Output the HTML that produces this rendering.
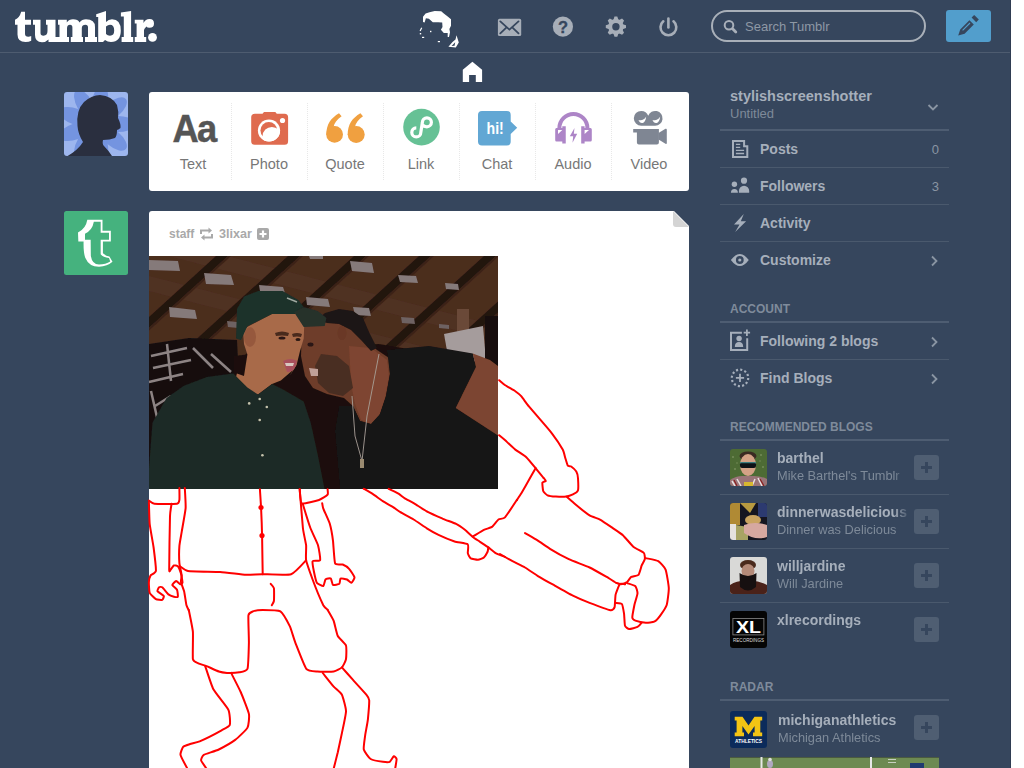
<!DOCTYPE html>
<html><head><meta charset="utf-8">
<style>
*{margin:0;padding:0;box-sizing:border-box}
html,body{width:1024px;height:768px;overflow:hidden;background:#fff}
body{font-family:"Liberation Sans",sans-serif;position:relative}
#page{position:absolute;left:0;top:0;width:1011px;height:768px;background:#36465d;overflow:hidden}
.abs{position:absolute}
svg{position:absolute;overflow:visible}
#hdr-line{left:0;top:52px;width:1011px;height:1px;background:#4e5c70}
.search{left:711px;top:10px;width:215px;height:32px;border:2px solid #a9b0b9;border-radius:16px}
.search span{position:absolute;left:32px;top:6.5px;font-size:13px;color:#8e98a5;line-height:16px}
.compose{left:946px;top:10px;width:45px;height:32px;background:#529ecc;border-radius:3px}
.box{background:#fff;border-radius:3px}
.ptype{left:149px;top:92px;width:540px;height:99px}
.col{position:absolute;top:0;width:76px;height:99px;text-align:center}
.col .lbl{position:absolute;left:0;width:76px;top:64px;font-size:14.5px;color:#777;line-height:16px}
.sep{position:absolute;top:11px;width:0;height:77px;border-left:1px dotted #e8e8e8}
.row{position:absolute;left:720px;width:229px;height:37px;border-top:1px solid #4a596d}
.row .nm{position:absolute;left:40px;top:10px;font-size:14px;font-weight:bold;color:#a6afbb;line-height:16px}
.row .cnt{position:absolute;right:10px;top:11px;font-size:13px;color:#8a95a3;line-height:16px}
.hd{position:absolute;left:730px;font-size:12px;font-weight:bold;color:#7f8b9b;line-height:14px}
.hline{position:absolute;left:720px;width:229px;height:2px;background:#4e5d72}
.rb{position:absolute;left:720px;width:229px;height:54px}
.rb .av{position:absolute;left:10px;top:7px;width:37px;height:37px;border-radius:3px;overflow:hidden}
.rb .n{position:absolute;left:57px;top:8px;font-size:14px;font-weight:bold;color:#a6afbb;white-space:nowrap;width:134px;overflow:hidden;line-height:16px}
.rb .d{position:absolute;left:57px;top:26px;font-size:12.8px;color:#7e8a99;white-space:nowrap;width:128px;overflow:hidden;line-height:16px}
.rb .n{-webkit-mask-image:linear-gradient(to right,#000 87%,transparent 100%)}
.rb .d{-webkit-mask-image:linear-gradient(to right,#000 92%,transparent 100%)}
.rb .pl{position:absolute;left:194px;top:13px;width:25px;height:25px;border-radius:3px;background:#4f5e72}
.rb .pl:before{content:"";position:absolute;left:7px;top:11px;width:11px;height:3px;background:#36465d}
.rb .pl:after{content:"";position:absolute;left:11px;top:7px;width:3px;height:11px;background:#36465d}
.rsep{position:absolute;left:720px;width:229px;height:1px;background:#4a596d}
.post{left:149px;top:211px;width:540px;height:600px;border-radius:3px 0 0 0}
</style></head><body>
<div id="page">
  <div class="abs" id="hdr-line"></div>
  <div class="abs" style="left:1010px;top:0;width:1px;height:768px;background:#2f3c52"></div>
  <!-- logo -->
  <svg style="left:0;top:0" width="180" height="52" fill="#fff">
    <path d="M21.2,11.8 L25,11.8 L25,19.7 L31,19.7 L31,24.8 L25,24.8 L25,33.5 Q25,36.8 28.2,36.8 Q30,36.8 31.2,36 L31.2,40.8 Q29,42 25.5,42 Q17.5,42 17.5,34.5 L17.5,24.8 L15,24.8 L15,19.7 Q19.5,18 21.2,11.8 Z"/>
    <path d="M33,19.7 L40.5,19.7 L40.5,33 Q40.5,35.7 43.5,35.7 Q47.5,35.5 47.5,31 L47.5,24.8 L46,24.8 L46,19.7 L55.5,19.7 L55.5,36.9 L59,36.9 L59,42 L48.5,42 L48.5,39.5 Q46,42.2 42,42.2 Q35,42.2 35,35 L35,24.8 L33,24.8 Z"/>
    <path d="M58,19.7 L66.8,19.7 L66.8,22.5 Q69,19.3 73,19.3 Q78,19.3 79.5,22.5 Q82,19.3 86,19.3 Q95,19.3 95,27 L95,36.9 L97,36.9 L97,42 L85,42 L85,36.9 L88,36.9 L88,27.5 Q88,24.8 85.5,24.8 Q82,24.8 81.8,28 L81.8,36.9 L83,36.9 L83,42 L70.8,42 L70.8,36.9 L72.4,36.9 L72.4,27.5 Q72.4,24.8 70,24.8 Q67.3,24.8 67,28 L67,36.9 L69,36.9 L69,42 L58,42 L58,36.9 L59.5,36.9 L59.5,24.8 L58,24.8 Z"/>
    <path fill-rule="evenodd" d="M96.2,14.3 L106,11.1 L106,22 Q108.5,19.3 112,19.3 Q120.8,19.3 120.8,30.6 Q120.8,42 111,42 Q107.5,42 105,40 L103,42 L98.2,42 L98.2,17 L96.2,17 Z M106,26.5 Q108,24.8 110,24.8 Q114.2,24.8 114.2,30.5 Q114.2,35.7 110,35.7 Q107.5,35.7 106,34 Z"/>
    <path d="M120.9,12.4 L131.1,10.9 L131.1,36.9 L133.2,36.9 L133.2,41.9 L121.6,41.9 L121.6,36.9 L123.8,36.9 L123.8,16.6 L120.9,16.6 Z"/>
    <path d="M134.75,19.8 L143.5,19.8 L143.5,23 Q145.5,19 149.5,19 Q154,19 154,23.4 Q154,27.8 149.5,27.8 Q147,27.8 146.5,26.5 Q144.5,28 144,30 L144,36.9 L146.2,36.9 L146.2,41.9 L134.75,41.9 L134.75,36.9 L136.6,36.9 L136.6,23.6 L134.75,23.6 Z"/>
    <circle cx="152.5" cy="37.4" r="4.4"/>
  </svg>
  <!-- hair icon -->
  <svg style="left:0;top:0" width="470" height="52" fill="#fff">
    <path d="M423,16.7 L425.6,13.5 L429.5,12.2 L434.7,10.9 L441.2,11.2 L443.8,13.5 L447.7,16.4 L451,19.3 L451,25.8 L449.4,29.1 L450,32.3 L449,36.9 L447.7,36.9 L447.7,33 L443.8,33 L440.9,29.7 L442.5,27.1 L442.2,22.6 L438,22.2 L432.8,22.2 L428.9,18.7 L425.9,18.3 L424.6,22.6 L423,21.9 Z"/>
    <path d="M421.7,27.8 L420.1,31" stroke="#fff" stroke-width="1.2" fill="none"/>
    <rect x="419.8" y="33" width="1.4" height="1.4"/><rect x="430" y="30.8" width="1.4" height="1.4"/>
    <rect x="422" y="36.8" width="2.2" height="1.2"/><rect x="437.8" y="41" width="2.2" height="1.2"/>
    <path fill-rule="evenodd" d="M456.5,35.3 L458.8,42.5 L455.8,47.6 L448.4,46.8 L452.5,42 L455.5,39.5 Z M455.2,42.3 L451.5,46 L454.6,45.8 Z"/>
  </svg>
  <!-- mail -->
  <svg style="left:0;top:0" width="700" height="52">
    <rect x="497.9" y="18.8" width="23.3" height="17.3" rx="1.6" fill="#a7aeb8"/>
    <path d="M500.3,21.4 L509.4,29.6 L518.5,21.4 M500.3,33.4 L506.3,27.6 M518.5,33.4 L512.5,27.6" stroke="#36465d" stroke-width="1.8" fill="none" stroke-linecap="round"/>
    <circle cx="562.9" cy="26.7" r="10.1" fill="#a7aeb8"/>
    <text x="563" y="32.8" text-anchor="middle" font-family="Liberation Sans" font-weight="bold" font-size="16.5" fill="#36465d" stroke="#36465d" stroke-width="0.3">?</text>
    <g transform="translate(615.9,26.7)" fill="#a7aeb8">
      <circle r="7.6"/>
      <path d="M-1.4,-10.1 L1.4,-10.1 L2.8,-6 L-2.8,-6 Z"/>
      <path d="M-1.4,-10.1 L1.4,-10.1 L2.8,-6 L-2.8,-6 Z" transform="rotate(45)"/>
      <path d="M-1.4,-10.1 L1.4,-10.1 L2.8,-6 L-2.8,-6 Z" transform="rotate(90)"/>
      <path d="M-1.4,-10.1 L1.4,-10.1 L2.8,-6 L-2.8,-6 Z" transform="rotate(135)"/>
      <path d="M-1.4,-10.1 L1.4,-10.1 L2.8,-6 L-2.8,-6 Z" transform="rotate(180)"/>
      <path d="M-1.4,-10.1 L1.4,-10.1 L2.8,-6 L-2.8,-6 Z" transform="rotate(225)"/>
      <path d="M-1.4,-10.1 L1.4,-10.1 L2.8,-6 L-2.8,-6 Z" transform="rotate(270)"/>
      <path d="M-1.4,-10.1 L1.4,-10.1 L2.8,-6 L-2.8,-6 Z" transform="rotate(315)"/>
      <circle r="3.7" fill="#36465d"/>
    </g>
    <path d="M663.3,21.3 A7.9,7.9 0 1 0 673.5,21.3" stroke="#a7aeb8" stroke-width="2.6" fill="none" stroke-linecap="round"/>
    <path d="M668.4,18.6 L668.4,27.4" stroke="#a7aeb8" stroke-width="2.6" fill="none" stroke-linecap="round"/>
  </svg>
  <div class="abs search"><span>Search Tumblr</span></div>
  <svg style="left:0;top:0" width="760" height="52">
    <circle cx="729" cy="25.2" r="4.3" stroke="#a9b0ba" stroke-width="2" fill="none"/>
    <path d="M732.6,28.8 L735.8,32" stroke="#a9b0ba" stroke-width="2.8" stroke-linecap="round"/>
  </svg>
  <div class="abs compose"></div>
  <svg style="left:0;top:0" width="1000" height="52" fill="#36465d">
    <path d="M971.6,17.6 L974.2,15 L978.8,19.6 L976.2,22.2 Z"/>
    <path fill-rule="evenodd" d="M969.4,20.2 L973.8,24.6 L964.6,33.8 L958.2,35.6 L960.2,29.4 Z M969.6,22.6 L962.2,30 L963,30.8 L970.4,23.4 Z"/>
  </svg>
  <!-- home -->
  <svg style="left:0;top:0" width="490" height="90" fill="#fff">
    <path d="M472.4,61.8 L482.1,69.8 L482.1,82.1 L475.8,82.1 L475.8,75 L469.1,75 L469.1,82.1 L462.8,82.1 L462.8,69.8 Z"/>
  </svg>

  <!-- avatar 1 -->
  <svg style="left:64px;top:92px" width="64" height="64" viewBox="0 0 64 64">
    <defs><clipPath id="c1"><rect width="64" height="64" rx="3"/></clipPath></defs>
    <g clip-path="url(#c1)">
      <rect width="64" height="64" fill="#9db6ee"/>
      <g fill="#7494e0" transform="translate(32,32)"><ellipse rx="8" ry="17" transform="rotate(10) translate(0,-22)"/><ellipse rx="8" ry="17" transform="rotate(50) translate(0,-22)"/><ellipse rx="8" ry="17" transform="rotate(90) translate(0,-22)"/><ellipse rx="8" ry="17" transform="rotate(130) translate(0,-22)"/><ellipse rx="8" ry="17" transform="rotate(170) translate(0,-22)"/><ellipse rx="8" ry="17" transform="rotate(210) translate(0,-22)"/><ellipse rx="8" ry="17" transform="rotate(250) translate(0,-22)"/><ellipse rx="8" ry="17" transform="rotate(290) translate(0,-22)"/><ellipse rx="8" ry="17" transform="rotate(330) translate(0,-22)"/></g>
      <path fill="#2a2f3f" d="M3.6,64 Q14,58 19,50 Q14,42 13.5,34 Q12,18 20,10 Q28,3 36,3 Q48,4 53,13 Q55,20 54,26 Q57,32 56.5,36 Q54,38 53,38 Q53,44 51,46 Q46,48 39,48 Q38,52 40,54 Q44,58 48,64 Z"/>
    </g>
  </svg>
  <div class="abs box ptype">
    <div class="col" style="left:6px"><div class="lbl">Text</div></div>
    <div class="sep" style="left:82px"></div>
    <div class="col" style="left:82px"><div class="lbl">Photo</div></div>
    <div class="sep" style="left:158px"></div>
    <div class="col" style="left:158px"><div class="lbl">Quote</div></div>
    <div class="sep" style="left:234px"></div>
    <div class="col" style="left:234px"><div class="lbl">Link</div></div>
    <div class="sep" style="left:310px"></div>
    <div class="col" style="left:310px"><div class="lbl">Chat</div></div>
    <div class="sep" style="left:386px"></div>
    <div class="col" style="left:386px"><div class="lbl">Audio</div></div>
    <div class="sep" style="left:462px"></div>
    <div class="col" style="left:462px"><div class="lbl">Video</div></div>
  </div>
  <!-- post type icons (page coords) -->
  <svg style="left:0;top:0" width="700" height="200">
    <text x="0" y="0" transform="translate(172.5,141.6) scale(0.92,1)" font-family="Liberation Sans" font-weight="bold" font-size="39.5" letter-spacing="-2" fill="#555" stroke="#555" stroke-width="0.5">Aa</text>
    <!-- camera -->
    <path fill="#df6b4f" d="M255,113.8 L262.5,113.8 L264,112 L275.3,112 L276.8,113.8 L284.6,113.8 Q288.1,113.8 288.1,117.3 L288.1,141.3 Q288.1,144.8 284.6,144.8 L254.7,144.8 Q251.2,144.8 251.2,141.3 L251.2,117.3 Q251.2,113.8 255,113.8 Z"/>
    <circle cx="269" cy="130.5" r="11.1" fill="#fff"/>
    <defs><clipPath id="lens"><circle cx="269" cy="130.5" r="11.1"/></clipPath></defs>
    <circle cx="268.8" cy="130.4" r="8.36" fill="#df6b4f"/>
    <circle cx="271.9" cy="136.2" r="9.3" fill="#fff" clip-path="url(#lens)"/>
    <circle cx="282.5" cy="120.5" r="2.6" fill="#fff"/>
    <!-- quote -->
    <g fill="#f0a040">
      <circle cx="334.6" cy="134.4" r="8.4"/>
      <path d="M326.3,135 C326.3,124 331,118 339,113.2 L341.6,116.2 C337,119.5 334,123 333.6,127 Z"/>
      <circle cx="356.2" cy="134.4" r="8.5"/>
      <path d="M347.7,135 C347.7,124 352.4,118 360.4,113.2 L363,116.2 C358.4,119.5 355.4,123 355,127 Z"/>
    </g>
    <!-- link -->
    <circle cx="421.5" cy="127.1" r="18.3" fill="#66c195"/>
    <path d="M416.3,127.9 A4.5,4.5 0 1 0 420.8,132.4 L422.4,122.3 A4.5,4.5 0 1 1 426.9,126.8 Q424,126.8 422.4,124.8" stroke="#fff" stroke-width="3.2" fill="none" stroke-linejoin="round"/>
    <!-- chat -->
    <path fill="#62a7d4" d="M482,110.9 L506.7,110.9 Q510.7,110.9 510.7,114.9 L510.7,121.5 L517.2,127.8 L510.7,134.1 L510.7,141.5 Q510.7,145.5 506.7,145.5 L482,145.5 Q478,145.5 478,141.5 L478,114.9 Q478,110.9 482,110.9 Z"/>
    <text x="486.6" y="134" font-family="Liberation Sans" font-weight="bold" font-size="16.5" fill="#fff" textLength="17.2" lengthAdjust="spacingAndGlyphs">hi!</text>
    <!-- audio -->
    <g fill="#ad85c7">
      <path d="M557.4,128 A16,16 0 0 1 589.4,128 L585.4,128 A12,12 0 0 0 561.4,128 Z"/>
      <path fill-rule="evenodd" d="M562.3,126.3 L565.75,126.3 L565.75,143.5 L562.3,143.5 L562.3,141.5 L556.5,141.5 Q555.2,141.5 555.2,140 L555.2,129.5 Q555.2,128 556.5,128 L562.3,128 Z M558,130 L562.3,130 L558,134 Z"/>
      <path fill-rule="evenodd" d="M584.6,126.3 L581.2,126.3 L581.2,143.5 L584.6,143.5 L584.6,141.5 L590.4,141.5 Q591.8,141.5 591.8,140 L591.8,129.5 Q591.8,128 590.4,128 L584.6,128 Z M584.6,130 L589,130 L584.6,134 Z"/>
      <path d="M574.5,128 L569.8,136.3 L573.2,136.3 L572.5,142.7 L577.2,133.8 L573.8,133.8 Z"/>
    </g>
    <!-- video -->
    <g fill="#7f8693">
      <path fill-rule="evenodd" d="M641.2,110.9 A7.4,7.4 0 0 1 648.2,115.8 A7.4,7.4 0 1 1 655.2,125.7 L641.2,125.7 A7.4,7.4 0 0 1 641.2,110.9 Z M638.5,120 C640,124.5 645.5,124.5 646.2,116.5 C644.5,119.8 641.5,120.8 638.5,120 Z M652.5,120 C654,124.5 659.5,124.5 660.2,116.5 C658.5,119.8 655.5,120.8 652.5,120 Z"/>
      <path d="M633.2,128.9 L658.9,128.9 L658.9,142.4 Q658.9,144.4 656.9,144.4 L638.9,144.4 Q636.9,144.4 636.9,142.4 L636.9,132.6 L633.2,132.6 Z"/>
      <path d="M658.5,133 L665.5,128.8 Q666.8,128.3 666.8,129.8 L666.8,143 Q666.8,144.4 665.5,143.7 L658.5,139.5 Z"/>
    </g>
  </svg>

  <!-- avatar 2 -->
  <svg style="left:64px;top:211px" width="64" height="64" viewBox="0 0 768 768">
    <rect width="768" height="768" rx="30" fill="#45b27e"/>
    <path fill="#fff" d="M280,105 L462,105 L462,238 L562,238 L562,367 L467,367 L467,508 Q500,540 545,545 L582,610 Q520,665 420,668 Q300,668 255,560 Q232,500 235,367 L172,367 L168,258 Q262,212 280,105 Z"/>
    <path fill="#45b27e" d="M358,130 L440,130 L440,262 L540,262 L540,345 L440,345 L440,520 Q470,558 540,565 L555,605 Q500,640 420,642 Q338,640 322,540 L320,345 L252,345 L252,272 Q340,235 358,130 Z"/>
  </svg>
  <div class="abs box post"></div>
  <!-- fold -->
  <svg style="left:0;top:0" width="700" height="240">
    <path d="M673,210 L690,210 L690,227 Z" fill="#36465d"/>
    <path d="M673,211 L689,227 L676,227 Q673,227 673,224 Z" fill="#d4d4d4"/>
  </svg>
  <!-- reblog header -->
  <div class="abs" style="left:169px;top:227px;font-size:12px;font-weight:bold;color:#a9a9a9;line-height:14px">staff</div>
  <svg style="left:0;top:0" width="300" height="250">
    <g fill="none" stroke="#a9a9a9" stroke-width="2">
      <path d="M201,234 L201,230.5 L209,230.5"/>
      <path d="M212,234 L212,237.5 L204,237.5"/>
    </g>
    <path d="M208.5,227.5 L212,230.5 L208.5,233.5 Z" fill="#a9a9a9"/>
    <path d="M204.5,234.5 L201,237.5 L204.5,240.5 Z" fill="#a9a9a9"/>
    <rect x="257" y="228" width="12" height="12" rx="2" fill="#a9a9a9"/>
    <path d="M263,230.5 L263,237.5 M259.5,234 L266.5,234" stroke="#fff" stroke-width="2.2"/>
  </svg>
  <div class="abs" style="left:219px;top:227px;font-size:12.6px;font-weight:bold;color:#a9a9a9;line-height:14px">3lixar</div>
  <!-- photo -->
  <svg style="left:149px;top:256px;overflow:hidden" width="349" height="233" viewBox="0 0 349 233">
<defs><filter id="soft" x="0" y="0" width="1" height="1"><feGaussianBlur stdDeviation="0.7"/></filter></defs><rect width="349" height="233" fill="#2a1a14"/><g filter="url(#soft)">
    <rect width="349" height="233" fill="#2e1912"/>
<!-- ceiling -->
<rect width="349" height="140" fill="#4b2d1f"/>
<g opacity="0.5"><polygon points="0,20 349,110 349,125 0,35" fill="#563424"/><polygon points="0,-20 349,70 349,85 0,-5" fill="#563424"/></g>
<polygon points="67,0 79,0 -75.0,140 -87.0,140" fill="#24140f"/>
<polygon points="79,0 82,0 -72.0,140 -75.0,140" fill="#3a2117"/>
<polygon points="139,0 151,0 -3.0,140 -15.0,140" fill="#24140f"/>
<polygon points="151,0 154,0 0.0,140 -3.0,140" fill="#3a2117"/>
<polygon points="205,0 217,0 63.0,140 51.0,140" fill="#24140f"/>
<polygon points="217,0 220,0 66.0,140 63.0,140" fill="#3a2117"/>
<polygon points="270,0 282,0 128.0,140 116.0,140" fill="#24140f"/>
<polygon points="282,0 285,0 131.0,140 128.0,140" fill="#3a2117"/>
<polygon points="335,0 347,0 193.0,140 181.0,140" fill="#24140f"/>
<polygon points="347,0 350,0 196.0,140 193.0,140" fill="#3a2117"/>
<polygon points="399,0 411,0 257.0,140 245.0,140" fill="#24140f"/>
<polygon points="411,0 414,0 260.0,140 257.0,140" fill="#3a2117"/>
<g fill="#857a7a">
  <polygon points="0,4 29,5 31,15 0,14"/>
  <polygon points="55,17 82,19 85,29 57,28"/>
  <polygon points="20,51 46,54 48,63 21,61"/>
  <polygon points="110,29 134,31 136,37 111,35"/>
  <polygon points="157,41 179,43 181,51 158,49"/>
  <polygon points="201,5 223,7 225,17 203,15"/>
  <polygon points="204,51 220,52 222,60 206,59"/>
  <polygon points="249,19 267,20 269,27 251,26"/>
  <polygon points="296,27 309,28 310,34 297,33"/>
  <polygon points="160,0 174,0 174,3 161,3"/>
  <polygon points="252,61 265,62 266,68 253,67" fill="#6e6262"/>
  <polygon points="290,68 300,69 300,73 290,72" fill="#6e6262"/>
  <polygon points="78,65 88,66 89,72 79,71" fill="#6e6262"/>
</g>
<!-- left wall with graffiti -->
<polygon points="0,88 40,82 88,84 90,125 60,122 0,150" fill="#151011"/>
<polygon points="0,120 30,112 60,118 40,135 0,215" fill="#151011"/>
<g stroke="#8d8383" stroke-width="2.5" fill="none">
  <path d="M2,100 L38,92 M4,112 L42,104 M18,88 L22,125 M0,126 L34,118 M44,92 L64,112 M62,98 L82,116"/>
  <path d="M2,135 L10,170 M6,150 L22,140"/>
</g>
<!-- background right post/poster -->
<rect x="308" y="53" width="12" height="28" fill="#6a4838"/>
<polygon points="295,78 334,70 337,105 300,106" fill="#a59c9c"/>
<rect x="336" y="60" width="13" height="60" fill="#140d0b"/>
<!-- dark backdrop -->
<polygon points="85,100 150,92 230,88 300,100 300,233 85,233" fill="#1d100c"/>
<!-- person 2 hair/face -->
<polygon points="153,72 168,64 188,64 205,70 216,82 228,94 240,102 241,118 237,140 231,158 222,168 211,165 204,150 195,142 178,138 164,132 156,120 152,100" fill="#6e3d2a"/>
<polygon points="200,90 222,92 238,104 240,120 236,142 230,160 222,168 212,164 206,148 202,128" fill="#7e4530"/>
<polygon points="168,64 176,57 190,53 204,55 214,62 220,76 228,92 222,95 212,84 202,74 190,68 178,67" fill="#1f1512"/>
<ellipse cx="193" cy="77" rx="4.5" ry="7" fill="#6a3826"/>
<polygon points="172,98 188,100 200,110 204,132 194,140 180,137 169,127 166,110" fill="#4a2d22"/>
<polygon points="160,112 169,113 169,120 162,120" fill="#c0a098"/>
<ellipse cx="161.5" cy="88.5" rx="3" ry="2" fill="#2a1812"/>
<!-- black shirt 2 -->
<polygon points="238,94 280,90 323.8,97.6 327,111 306.7,152 349,179.4 349,233 191,233 186,175 190,150 204,150 211,165 222,168 231,158 237,140 241,118" fill="#161314"/>
<!-- right arm -->
<polygon points="323.8,97.6 341,104 349,110 349,179.4 306.7,152 327,111" fill="#7b4430"/>
<!-- person 1 face -->
<polygon points="100,70 123,58 147.6,56 155.5,63 154.7,82.6 151,95 147.6,109 140.6,120 144,114 131.8,124.5 123,128 109,138.6 84.4,131.6 87.9,117.5 95,120 98.4,98.4 95,88 94,73.8" fill="#a86a4a"/>
<ellipse cx="101" cy="81" rx="6" ry="10" fill="#96593d"/>
<path d="M126,77 Q133,74 140,77 L139,80 Q133,79 127,80 Z" fill="#4a2a1e"/><path d="M143,78 Q148,76 153,78 L152,81 Q148,80 144,81 Z" fill="#4a2a1e"/>
<path d="M134,105 Q142,101 148,105 Q146,117 138,116 Z" fill="#a8505c"/>
<path d="M136,107 L145,107 L144,110 L137,110 Z" fill="#d8c8c0"/>
<ellipse cx="133" cy="82" rx="3.5" ry="1.6" fill="#2a1812"/><ellipse cx="149" cy="83.5" rx="2.5" ry="1.5" fill="#2a1812"/>
<!-- cap -->
<polygon points="87,82.6 88,52.7 95,40.4 109,35 133.6,35 149.4,44 154.7,51 145.9,58 123,58 105.5,66.8 98.4,70.3 92,84" fill="#1e3029"/>
<polygon points="145,56 154.7,51 168.7,55 177.5,62 175.7,70 154.7,71" fill="#25302b"/>
<path d="M138,42 L148,46" stroke="#9fa9a0" stroke-width="1.5"/>
<!-- person 1 shirt -->
<polygon points="0,212.4 3.5,166.7 17.6,142 35,129.8 58,121 84.4,117.5 98.4,131.6 109,138.6 123,128 133.6,133.3 154.7,145.6 161.7,166.7 168.7,198.4 175.7,234 0,234" fill="#1f2a25"/>
<g fill="#c4c3ad">
  <circle cx="100.2" cy="147.4" r="1.3"/><circle cx="110.7" cy="143" r="1.3"/><circle cx="117.8" cy="151" r="1.3"/><circle cx="110.7" cy="164" r="1.3"/><circle cx="113.4" cy="199.2" r="1.3"/>
</g>
<!-- necklace -->
<path d="M230,98 L218,160 L213,205 M203,140 L206,180 L213,205" stroke="#a8a098" stroke-width="0.9" fill="none"/>
<rect x="211" y="203" width="4" height="9" fill="#9a8a70"/>

  </g></svg>
  <!-- drawing -->
  <svg style="left:0;top:0" width="700" height="768">
    <g fill="none" stroke="#f00" stroke-width="2" stroke-linejoin="round" stroke-linecap="round">
<path d="M148.9,500.6 C149.4,500.9 152.1,503.5 154.4,503.8 C156.7,504.1 174.9,504.1 177.0,503.8 C179.1,503.5 179.2,501.0 179.4,499.8 C179.6,498.6 179.4,490.7 179.4,489.7 C179.4,488.7 179.4,488.2 179.4,488.1"/>
<path d="M148.9,502.2 C149.0,504.0 149.3,520.3 149.7,524.1 C150.1,527.9 153.1,543.6 153.6,547.5 C154.1,551.4 156.2,568.6 155.9,570.9 C155.6,573.2 151.1,574.7 150.5,575.6 C149.9,576.5 149.0,580.5 148.9,581.9 C148.8,583.3 149.1,591.4 149.7,592.8 C150.3,594.2 154.9,598.5 155.9,599.1 C156.9,599.7 161.5,600.1 162.2,599.8 C162.9,599.5 164.2,596.6 163.8,595.9 C163.4,595.2 157.9,591.9 157.5,591.2 C157.1,590.5 158.7,587.6 159.1,587.3 C159.5,587.0 161.4,586.7 162.2,587.3 C163.0,587.9 167.4,593.6 168.4,594.4 C169.4,595.2 173.1,596.5 173.9,596.7 C174.7,596.9 177.5,597.3 177.8,596.7 C178.1,596.1 177.5,590.7 177.0,589.7 C176.5,588.7 172.4,585.7 172.3,585.0 C172.2,584.3 175.5,581.2 176.2,581.1 C176.9,581.0 179.7,584.1 180.2,584.2 C180.7,584.3 182.4,583.6 182.5,582.7 C182.6,581.8 181.3,574.7 180.9,573.3 C180.5,571.9 178.4,566.9 177.8,566.2 C177.2,565.6 174.5,565.2 173.9,565.5 C173.3,565.8 171.2,569.1 170.8,569.4 C170.4,569.7 169.3,573.8 169.2,569.4 C169.1,565.0 169.8,521.7 170.0,516.2 C170.2,510.7 171.5,504.8 171.6,503.8"/>
<path d="M184.8,488.1 C184.9,489.8 185.9,504.8 185.6,508.4 C185.3,512.0 182.2,528.8 181.7,531.9 C181.2,535.0 179.6,543.3 179.4,545.9 C179.2,548.5 179.2,560.6 179.4,563.1 C179.6,565.6 181.6,574.0 181.7,575.6 C181.8,577.2 180.7,580.6 180.9,581.9 C181.1,583.2 183.6,589.3 184.1,591.2 C184.6,593.1 186.0,603.4 186.4,605.0 C186.8,606.6 188.4,609.6 188.6,610.0"/>
<path d="M180.4,566.6 C181.0,567.0 184.7,570.4 188.0,570.9 C191.3,571.4 215.4,571.7 220.2,572.0 C225.0,572.3 242.5,574.6 246.0,574.8 C249.5,575.0 258.3,574.2 262.1,574.2 C265.9,574.2 287.4,575.4 291.1,574.2 C294.8,573.0 304.9,561.4 306.1,560.2"/>
<path d="M259.9,489.3 C260.0,490.7 260.8,502.6 261.0,506.5 C261.2,510.4 262.0,531.0 262.1,536.6 C262.2,542.2 262.6,571.1 262.7,574.2"/>
<path d="M299.7,489.3 C300.0,492.5 302.4,523.3 302.9,528.0 C303.4,532.7 305.8,542.5 306.1,545.2 C306.4,547.9 305.6,557.3 306.1,560.2 C306.6,563.1 311.2,575.7 312.6,579.5 C314.0,583.3 322.1,602.8 323.3,605.3 C324.6,607.8 327.2,609.2 327.6,609.6"/>
<path d="M299.7,489.3 C299.9,490.5 300.2,502.4 301.8,503.3 C303.4,504.2 316.9,500.7 319.0,500.0 C321.1,499.3 326.9,495.6 327.6,494.7 C328.3,493.8 327.6,489.8 327.6,489.3"/>
<path d="M302.9,504.3 C303.5,506.3 309.1,524.6 310.4,528.0 C311.7,531.4 317.2,542.5 318.0,545.2 C318.8,547.9 320.6,558.9 320.1,560.2 C319.7,561.5 313.1,560.0 312.6,561.3 C312.2,562.5 314.3,573.4 314.7,575.2 C315.1,577.0 316.2,581.9 316.9,582.8 C317.6,583.7 322.6,586.3 323.3,586.0 C324.0,585.7 324.9,580.1 325.5,579.5 C326.1,578.9 330.2,578.0 330.8,578.5 C331.4,579.0 332.3,584.5 333.0,584.9 C333.7,585.3 338.8,584.3 339.4,583.8 C340.0,583.3 339.9,578.9 340.5,578.5 C341.1,578.1 346.1,579.1 347.0,579.5 C347.9,579.9 350.7,583.0 351.3,582.8 C351.9,582.6 354.7,578.6 354.5,577.4 C354.3,576.2 350.1,569.9 349.1,568.8 C348.1,567.7 343.9,565.0 342.7,564.5 C341.5,564.0 335.9,565.4 335.1,563.4 C334.3,561.4 333.4,544.2 333.0,540.9 C332.6,537.6 330.6,526.4 329.8,523.7 C329.0,521.0 323.9,510.3 323.3,508.6 C322.7,506.9 322.3,503.7 322.2,503.3"/>
<path d="M270.7,583.8 C271.0,584.2 273.6,586.7 273.9,588.1 C274.2,589.5 274.1,599.6 273.9,601.0 C273.7,602.4 272.0,604.9 271.8,605.3"/>
<path d="M188.8,610.0 C189.1,611.8 192.6,627.8 192.9,631.9 C193.2,636.0 192.5,656.6 192.9,659.2 C193.3,661.8 197.2,662.7 198.3,663.3 C199.4,663.9 204.8,665.4 206.5,666.1 C208.2,666.8 217.1,670.9 218.8,671.5 C220.5,672.1 225.3,672.8 227.0,672.9 C228.7,673.0 237.6,672.6 239.3,672.3 C241.0,672.0 246.7,671.3 247.5,668.8 C248.3,666.3 248.8,647.2 248.9,642.8 C249.0,638.4 248.1,618.1 248.4,615.5 C248.7,612.9 251.8,611.9 253.0,611.4 C254.2,610.9 260.3,610.0 262.6,610.0 C264.9,610.0 278.1,610.0 280.4,611.4 C282.7,612.8 288.6,623.8 289.9,626.4 C291.1,629.0 294.0,639.3 295.4,642.8 C296.8,646.3 304.5,666.4 306.3,668.8 C308.1,671.2 315.0,671.3 317.3,671.5 C319.6,671.7 331.6,671.8 333.7,671.5 C335.8,671.2 340.9,668.4 341.9,667.4 C342.9,666.4 345.7,661.0 346.0,659.2 C346.3,657.4 346.7,647.4 346.0,645.5 C345.3,643.6 338.8,638.0 337.8,636.0 C336.8,634.0 334.5,623.1 333.7,620.9 C332.9,618.7 328.2,610.9 327.7,610.0"/>
<path d="M205.2,666.1 C205.9,668.0 211.5,685.7 213.4,689.3 C215.3,692.9 227.0,706.8 228.4,709.8 C229.8,712.8 230.4,723.1 229.8,724.8 C229.2,726.5 224.1,728.9 221.6,730.3 C219.1,731.7 202.3,740.2 199.7,741.3 C197.1,742.4 191.5,743.5 190.1,744.0 C188.7,744.5 184.1,745.8 183.3,746.7 C182.5,747.6 180.2,753.1 180.5,754.9 C180.8,756.7 186.8,767.5 187.4,768.6"/>
<path d="M231.1,672.9 C231.9,674.5 239.2,688.6 240.7,692.0 C242.2,695.4 248.3,710.9 248.9,713.9 C249.5,716.9 248.6,725.4 247.5,727.6 C246.4,729.8 237.6,738.1 235.2,739.9 C232.8,741.7 221.4,748.2 218.8,749.5 C216.2,750.8 205.3,754.0 203.8,754.9 C202.3,755.8 200.9,759.3 201.1,760.4 C201.3,761.5 206.1,767.9 206.5,768.6"/>
<path d="M322.7,672.9 C323.6,674.0 332.1,684.8 333.7,686.6 C335.3,688.4 340.9,692.8 341.9,694.8 C342.9,696.8 346.0,708.0 346.0,711.2 C346.0,714.4 342.6,729.7 341.9,733.1 C341.2,736.5 338.5,749.2 337.8,752.2 C337.1,755.2 334.0,767.2 333.7,768.6"/>
<path d="M341.9,667.4 C342.8,668.4 350.8,677.4 352.8,679.7 C354.9,682.0 365.1,693.1 366.5,694.8 C367.9,696.5 369.1,698.2 369.2,700.2 C369.3,702.2 368.2,716.4 367.9,719.4 C367.6,722.4 365.4,733.3 365.1,735.8 C364.8,738.3 363.3,747.6 363.8,749.5 C364.3,751.4 369.0,758.0 370.6,759.0 C372.2,760.0 381.3,761.6 382.9,761.8 C384.5,762.0 388.8,762.3 389.7,761.8 C390.6,761.3 393.2,756.5 393.8,756.3 C394.4,756.1 396.5,758.0 396.6,759.0 C396.7,760.0 395.3,767.8 395.2,768.6"/>
<path d="M363.8,488.8 C364.5,489.2 371.0,492.9 372.6,493.9 C374.2,494.9 381.1,500.1 382.8,501.2 C384.5,502.3 391.6,506.2 393.1,507.1 C394.6,508.0 398.7,511.2 400.4,512.2 C402.1,513.2 411.4,518.2 413.6,519.5 C415.8,520.8 424.7,527.0 426.8,528.3 C428.9,529.6 436.2,533.8 438.5,534.9 C440.8,536.0 452.2,540.7 454.6,541.5 C457.0,542.3 466.7,543.4 467.8,544.4 C468.9,545.4 467.6,552.0 467.8,553.2 C468.0,554.4 469.8,557.9 470.7,558.4 C471.6,558.9 476.9,559.9 478.0,559.8 C479.1,559.7 483.1,558.3 483.9,557.6 C484.7,556.9 487.2,552.6 487.6,551.8 C488.0,550.9 488.2,547.8 488.3,547.4"/>
<path d="M388.7,488.8 C389.6,489.2 397.6,493.1 398.9,493.9 C400.2,494.7 403.3,497.4 404.8,498.3 C406.3,499.2 414.6,503.7 416.5,504.9 C418.4,506.1 426.0,511.0 428.2,512.2 C430.4,513.4 440.6,517.8 442.9,518.8 C445.2,519.8 454.3,523.0 456.1,523.9 C457.9,524.8 463.6,528.8 464.9,529.8 C466.2,530.8 471.0,535.4 472.2,536.4 C473.4,537.4 478.2,540.6 479.5,541.5 C480.8,542.4 487.0,546.4 488.3,547.4 C489.6,548.4 494.2,552.4 495.6,553.2 C497.0,554.0 504.2,556.6 505.0,556.9"/>
<path d="M472.9,536.4 C473.8,535.9 482.3,530.6 483.9,529.8 C485.5,529.0 490.8,527.8 492.0,526.9 C493.2,526.0 497.4,520.3 498.5,519.5 C499.6,518.7 503.5,519.0 505.0,517.4 C506.5,515.8 515.9,501.4 516.9,499.9"/>
<path d="M499.2,380.2 C499.7,380.6 503.9,384.3 505.2,385.2 C506.5,386.1 514.0,390.3 515.3,391.2 C516.6,392.1 520.1,394.9 521.2,396.2 C522.3,397.5 527.4,404.6 528.9,406.4 C530.4,408.2 537.0,415.9 539.0,418.2 C541.0,420.5 550.6,431.7 552.6,434.3 C554.6,436.9 561.6,447.6 562.7,449.6 C563.8,451.6 564.9,456.7 565.3,458.0 C565.7,459.3 567.3,464.9 567.8,465.6 C568.3,466.3 570.5,466.0 571.2,466.5 C571.9,467.0 575.7,470.6 576.3,471.6 C576.9,472.6 577.9,476.8 578.0,478.3 C578.1,479.9 578.4,488.9 578.0,490.2 C577.6,491.5 573.9,493.9 572.9,494.4 C571.9,494.9 567.5,496.4 566.1,496.6 C564.7,496.8 557.4,496.7 555.9,496.6 C554.4,496.5 548.6,495.8 547.5,495.3 C546.4,494.8 543.6,492.1 543.2,491.0 C542.8,489.9 542.2,483.4 542.4,482.6 C542.6,481.8 545.7,481.3 545.8,480.9 C545.9,480.5 544.1,478.6 543.2,477.5 C542.4,476.4 537.0,469.9 535.6,468.2 C534.2,466.5 528.0,458.8 526.3,457.2 C524.6,455.6 517.1,451.0 515.3,449.6 C513.5,448.2 506.5,441.5 505.2,440.3 C503.9,439.1 499.7,435.6 499.2,435.2"/>
<path d="M535.6,468.2 C535.0,469.2 530.0,478.0 528.9,480.0 C527.8,482.0 523.1,490.2 522.1,491.9 C521.1,493.6 517.4,499.3 517.0,500.0"/>
<path d="M566.7,496.7 C567.4,497.3 573.1,502.4 575.0,504.0 C576.9,505.6 587.5,514.1 589.6,515.4 C591.7,516.7 598.1,518.6 600.0,519.6 C601.9,520.6 610.6,526.6 612.5,527.9 C614.4,529.2 621.2,533.6 622.9,535.2 C624.6,536.8 631.6,545.2 633.3,546.7 C635.0,548.2 642.8,551.9 643.8,552.9 C644.8,553.9 645.0,558.2 644.8,559.2 C644.6,560.2 642.2,564.1 641.7,565.4 C641.2,566.7 639.4,573.8 638.5,574.8 C637.6,575.8 632.2,576.3 631.2,576.9 C630.2,577.5 628.0,581.5 627.1,582.1 C626.2,582.7 621.7,584.1 620.8,584.2 C619.9,584.3 617.0,583.2 616.7,583.1"/>
<path d="M645.8,558.1 C646.8,558.4 656.6,560.2 658.3,561.2 C659.9,562.2 664.7,567.3 665.6,569.6 C666.5,571.9 668.7,585.3 668.8,588.3 C668.9,591.2 667.4,602.7 666.7,605.0 C666.0,607.3 661.4,614.0 660.4,615.4 C659.4,616.8 655.4,621.1 654.2,621.7 C653.0,622.3 647.4,622.8 645.8,622.7 C644.2,622.6 636.5,621.0 635.4,620.6 C634.3,620.2 632.4,618.8 632.3,617.5 C632.2,616.2 634.0,607.0 634.4,605.0 C634.8,603.0 637.4,595.1 637.5,593.5 C637.6,591.9 636.3,587.1 635.4,586.2 C634.5,585.3 627.8,583.4 627.1,583.1"/>
<path d="M525.0,533.1 C526.0,533.7 535.4,539.1 537.5,540.4 C539.6,541.7 547.4,547.2 550.0,548.8 C552.6,550.4 565.5,557.6 568.8,559.2 C572.1,560.8 586.3,565.9 589.6,567.5 C592.9,569.1 606.0,576.6 608.3,577.9 C610.6,579.2 615.3,582.6 616.7,583.1 C618.1,583.6 624.3,584.1 625.0,584.2"/>
<path d="M500.0,554.0 C501.0,554.6 510.4,560.1 512.5,561.2 C514.6,562.3 522.9,566.3 525.0,567.5 C527.1,568.7 535.1,574.3 537.5,575.8 C539.9,577.3 551.2,583.6 554.2,585.2 C557.2,586.9 569.9,594.1 572.9,595.6 C575.9,597.1 586.5,601.7 589.6,602.9 C592.7,604.1 608.3,609.9 610.4,610.2 C612.5,610.6 614.2,608.4 614.6,607.1 C615.0,605.8 615.2,596.5 615.6,594.6 C616.0,592.7 619.0,585.1 619.8,584.2 C620.6,583.3 624.6,584.2 625.0,584.2"/>
<path d="M615.6,602.9 C616.1,603.0 621.2,603.1 621.9,604.0 C622.6,604.9 623.7,611.5 624.0,613.3 C624.3,615.1 624.6,624.5 625.0,625.8 C625.4,627.1 628.2,628.9 629.2,629.0 C630.2,629.1 636.5,627.4 637.5,626.9 C638.5,626.4 641.4,623.1 641.7,622.7"/>
    </g>
    <circle cx="261" cy="507.5" r="2.6" fill="#f00"/>
    <circle cx="262" cy="535.5" r="2.6" fill="#f00"/>
  </svg>

  <!-- sidebar -->
  <div class="abs" style="left:730px;top:88px;font-size:14.5px;font-weight:bold;color:#a6afbb;line-height:16px">stylishscreenshotter</div>
  <div class="abs" style="left:730px;top:105.5px;font-size:13px;color:#7e8a99;line-height:16px">Untitled</div>
  <svg style="left:0;top:0" width="960" height="120"><path d="M928.5,105 L933,109.5 L937.5,105" stroke="#8a95a3" stroke-width="1.8" fill="none"/></svg>
  <div class="hline" style="top:129px"></div>
  <div class="row" style="top:131px;border-top:none"><div class="nm">Posts</div><div class="cnt">0</div></div>
  <div class="row" style="top:167px"><div class="nm">Followers</div><div class="cnt">3</div></div>
  <div class="row" style="top:204px"><div class="nm">Activity</div></div>
  <div class="row" style="top:241px"><div class="nm">Customize</div></div>

  <svg style="left:0;top:0" width="960" height="400">
    <g fill="none" stroke="#a6afbb" stroke-width="2">
      <path d="M733,141 L744.1,141 L744.1,146.3 L747.3,146.3 L747.3,157 L733,157 Z"/>
    </g>
    <g stroke="#a6afbb" stroke-width="1.3">
      <path d="M735.9,144.4 L740.2,144.4 M735.9,147.3 L740.2,147.3 M735.9,150.4 L744.1,150.4 M735.9,153.5 L744.1,153.5"/>
    </g>
    <g fill="#a6afbb">
      <circle cx="734.4" cy="184.2" r="2.7"/>
      <path d="M730.9,192.8 A3.5,3.9 0 0 1 737.9,192.8 Z"/>
      <circle cx="744" cy="180.7" r="3.1"/>
      <path d="M738.9,192.8 L738.9,191 A5.15,5.2 0 0 1 749.2,191 L749.2,192.8 Z"/>
      <path d="M743.8,213.9 L734,224.5 L739.5,224.5 L735.2,231.9 L746.1,221.3 L740.8,221.3 Z"/>
      <path fill-rule="evenodd" d="M730.9,260 Q739.8,248 748.8,260 Q739.8,272 730.9,260 Z M739.8,256.1 A3.9,3.9 0 1 0 739.8,263.9 A3.9,3.9 0 1 0 739.8,256.1 Z"/>
      <circle cx="739.8" cy="260" r="1.6"/>
      <circle cx="739.1" cy="338.5" r="2.7"/>
      <path d="M734.8,346.9 Q734.8,341.9 739,341.9 Q743.2,341.9 743.2,346.9 Z"/>
    </g>
    <g fill="none" stroke="#a6afbb" stroke-width="2">
      <path d="M741.9,332.8 L731,332.8 L731,350 L747.2,350 L747.2,338.2"/>
      <path d="M746.9,329.5 L746.9,336 M743.7,332.7 L750.1,332.7" stroke-width="1.8"/>
      <path d="M740,373.8 L740,382 M735.9,377.9 L744.1,377.9" stroke-width="1.8"/>
      <circle cx="740" cy="377.9" r="8.2" stroke-dasharray="2.1 2.19" stroke-width="2.2"/>
    </g>
    <g fill="none" stroke="#8a95a3" stroke-width="1.8">
      <path d="M932,256.5 L936.5,261 L932,265.5"/>
      <path d="M932,337.5 L936.5,342 L932,346.5"/>
      <path d="M932,374.5 L936.5,379 L932,383.5"/>
    </g>
  </svg>
  <div class="hd" style="top:302px">ACCOUNT</div>
  <div class="hline" style="top:321px"></div>
  <div class="row" style="top:323px;border-top:none"><div class="nm">Following 2 blogs</div></div>
  <div class="row" style="top:359px"><div class="nm">Find Blogs</div></div>
  <div class="hd" style="top:420px">RECOMMENDED BLOGS</div>
  <div class="hline" style="top:439px"></div>
  <div class="rb" style="top:442px"><div class="av"><svg width="37" height="37" viewBox="0 0 37 37" style="left:0;top:0">
<rect width="37" height="37" fill="#4d6b34"/>

<g fill="#8fa070" opacity="0.6"><circle cx="3" cy="8" r="1"/><circle cx="31" cy="6" r="1"/><circle cx="33" cy="18" r="1"/><circle cx="5" cy="20" r="1"/><circle cx="30" cy="12" r="0.8"/><circle cx="7" cy="14" r="0.8"/></g>
<ellipse cx="18" cy="7" rx="8.5" ry="4.5" fill="#3a2a22"/>
<ellipse cx="18" cy="16" rx="8" ry="11" fill="#d4a286"/>
<rect x="10" y="13.2" width="16" height="5.8" rx="2" fill="#0e1216"/>
<rect x="10" y="13.2" width="16" height="1" fill="#3a8a90"/>
<path d="M0,37 L0,31 Q6,27 12,27 L24,27 Q31,27 37,30 L37,37 Z" fill="#9a7478"/>
<path d="M2,32 L5,37 M7,30 L11,37 M28,29 L32,37 M25,30 L22,37" stroke="#e8e0e0" stroke-width="1.5"/>
<path d="M4,31 L7,37 M30,30 L34,37" stroke="#8a2020" stroke-width="1.2"/>
<rect x="14" y="33" width="9" height="4" fill="#d8b830"/>
</svg></div><div class="n">barthel</div><div class="d">Mike Barthel's Tumblr</div><div class="pl"></div></div>
  <div class="rsep" style="top:494px"></div>
  <div class="rb" style="top:496px"><div class="av"><svg width="37" height="37" viewBox="0 0 37 37" style="left:0;top:0">
<rect width="37" height="37" fill="#151520"/>
<rect x="0" y="0" width="10" height="22" fill="#b08a34"/>
<path d="M10,0 L26,0 L20,10 Z" fill="#b89a40"/>
<rect x="28" y="0" width="9" height="14" fill="#2c3a70"/>
<rect x="0" y="21" width="6" height="16" fill="#e6e2de"/>
<path d="M6,22 L18,24 L18,37 L6,37 Z" fill="#a8a464"/>
<ellipse cx="23" cy="17" rx="8" ry="5" fill="#c9a360"/>
<path d="M14,22 Q25,18 37,22 L37,34 Q25,38 14,30 Z" fill="#d6a8a0"/>
</svg></div><div class="n">dinnerwasdelicious</div><div class="d">Dinner was Delicious</div><div class="pl"></div></div>
  <div class="rsep" style="top:548px"></div>
  <div class="rb" style="top:550px"><div class="av"><svg width="37" height="37" viewBox="0 0 37 37" style="left:0;top:0">
<rect width="37" height="37" fill="#d9d9d7"/>
<path d="M0,37 L0,28 Q8,23 18,24 Q28,23 37,28 L37,37 Z" fill="#4a2219"/>
<ellipse cx="18" cy="8" rx="8" ry="5" fill="#4a2a1c"/>
<ellipse cx="18" cy="14" rx="6.5" ry="7" fill="#b48a78"/>
<path d="M9.5,16 Q18,22 26.5,16 L26,30 Q18,37 10,30 Z" fill="#161010"/>
</svg></div><div class="n">willjardine</div><div class="d">Will Jardine</div><div class="pl"></div></div>
  <div class="rsep" style="top:602px"></div>
  <div class="rb" style="top:604px"><div class="av"><svg width="37" height="37" viewBox="0 0 37 37" style="left:0;top:0">
<rect width="37" height="37" fill="#050505"/>
<rect x="2.9" y="7.4" width="31" height="16.5" fill="none" stroke="#8a8a8a" stroke-width="0.8"/>
<text x="18.5" y="21.8" text-anchor="middle" font-family="Liberation Sans" font-weight="bold" font-size="17" fill="#fff" textLength="25" lengthAdjust="spacingAndGlyphs">XL</text>
<text x="18.5" y="30.5" text-anchor="middle" font-family="Liberation Sans" font-size="4.5" fill="#ddd" textLength="31" lengthAdjust="spacingAndGlyphs">RECORDINGS</text>
</svg></div><div class="n" style="top:8px">xlrecordings</div><div class="pl"></div></div>
  <div class="hd" style="top:680px">RADAR</div>
  <div class="hline" style="top:699px"></div>
  <div class="rb" style="top:704px"><div class="av"><svg width="37" height="37" viewBox="0 0 37 37" style="left:0;top:0">
<rect width="37" height="37" fill="#0b2b5b"/>
<path d="M4.7,5.8 L12.5,5.8 L18.5,14.5 L24.5,5.8 L32.2,5.8 L32.2,9.5 L30.3,9.5 L30.3,21.5 L32.2,21.5 L32.2,25.2 L23,25.2 L23,21.5 L24.6,21.5 L24.6,15 L18.5,23.5 L12.4,15 L12.4,21.5 L14,21.5 L14,25.2 L4.7,25.2 L4.7,21.5 L6.6,21.5 L6.6,9.5 L4.7,9.5 Z" fill="#f3c414"/>
<text x="18.5" y="31.6" text-anchor="middle" font-family="Liberation Sans" font-weight="bold" font-size="5.5" fill="#fff" textLength="27" lengthAdjust="spacingAndGlyphs">ATHLETICS</text>
</svg></div><div class="n" style="left:58px">michiganathletics</div><div class="d" style="left:58px">Michigan Athletics</div><div class="pl" style="top:11px"></div></div>
  <svg style="left:730px;top:757px" width="209" height="11">
  <rect width="209" height="11" fill="#6d8a52"/>
  <rect x="0" y="0" width="209" height="1" fill="#4a5a40"/>
  <rect x="30.5" y="0" width="2" height="11" fill="#e8e8e8"/>
  <rect x="140" y="0" width="2" height="11" fill="#e8e8e8"/>
  <rect x="158" y="2" width="8" height="1" fill="#c8d0c0"/><rect x="158" y="5" width="8" height="1" fill="#c8d0c0"/>
  <ellipse cx="40" cy="7" rx="3" ry="4" fill="#b0a8c0"/><circle cx="40" cy="2.5" r="1.8" fill="#e0e0e0"/>
  <rect x="180" y="6" width="14" height="5" fill="#203a70"/>
</svg>
</div>
</body></html>
